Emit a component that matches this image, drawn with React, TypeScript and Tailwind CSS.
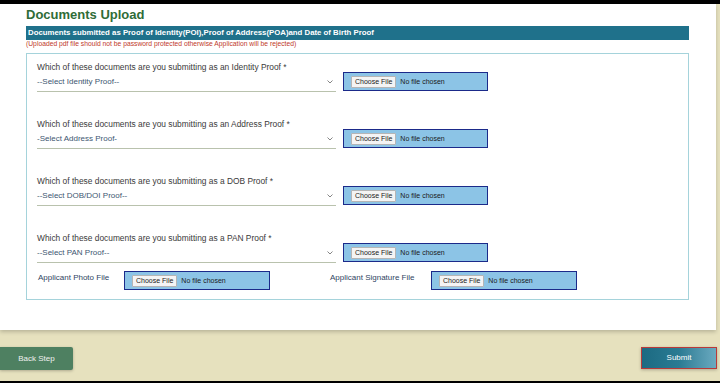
import React from "react";

const font = { fontFamily: '"Liberation Sans", Arial, sans-serif' };

const FileBox = ({ className = "" }: { className?: string }) => (
  <div
    className={`flex h-[19px] w-[145px] items-center gap-[4px] border-[1.5px] border-[#1b2a8a] bg-[#8cc4e6] pl-[7px] ${className}`}
  >
    <span className="flex h-[12px] items-center rounded-[1px] border border-[#b5b5b5] bg-[#f4f4f4] px-[3px] text-[7px] leading-none text-[#222]">
      Choose File
    </span>
    <span className="text-[7px] leading-none text-[#1a1a1a]">No file chosen</span>
  </div>
);

const ProofRow = ({ label, placeholder }: { label: string; placeholder: string }) => (
  <div className="flex items-end gap-[7px] pb-[26px]">
    <div className="flex w-[299px] flex-col">
      <div className="h-[12px] text-[8.4px] leading-[12px] text-[#3a3a3a]">{label}</div>
      <div className="flex h-[19px] items-center justify-between border-b border-[#b9c2ad] pr-[3px]">
        <span className="text-[8px] text-[#3d5670]">{placeholder}</span>
        <svg width="6" height="4" viewBox="0 0 6 4" fill="none">
          <path d="M0.5 0.5 L3 3 L5.5 0.5" stroke="#777" strokeWidth="0.9" />
        </svg>
      </div>
    </div>
    <FileBox className="mb-[1px]" />
  </div>
);

export default function App() {
  return (
    <div className="flex h-[383px] w-[720px] flex-col bg-[#e6e1be]" style={font}>
      <div className="h-[4px] bg-black" />
      <div className="mr-[4px] h-[326px] bg-white pl-[26px] pt-[3px] shadow-[0_2px_4px_rgba(0,0,0,0.2)]">
        <h1 className="text-[13px] font-bold leading-[16px] text-[#2f6c37]">Documents Upload</h1>
        <div className="mt-[3px] flex h-[14px] w-[663px] items-center bg-[#1f718b] pl-[2px] text-[7.8px] font-bold text-white">
          Documents submitted as Proof of Identity(POI),Proof of Address(POA)and Date of Birth Proof
        </div>
        <div className="h-[8px] text-[6.75px] leading-[8px] text-[#c0392b]">
          (Uploaded pdf file should not be password protected otherwise Application will be rejected)
        </div>
        <div className="mt-[5px] w-[663px] border border-[#a5d3db] pl-[10px] pt-[7px] pb-[8px]">
          <ProofRow
            label="Which of these documents are you submitting as an Identity Proof *"
            placeholder="--Select Identity Proof--"
          />
          <ProofRow
            label="Which of these documents are you submitting as an Address Proof *"
            placeholder="-Select Address Proof-"
          />
          <ProofRow
            label="Which of these documents are you submitting as a DOB Proof *"
            placeholder="--Select DOB/DOI Proof--"
          />
          <div className="-mb-[18px]">
            <ProofRow
              label="Which of these documents are you submitting as a PAN Proof *"
              placeholder="--Select PAN Proof--"
            />
          </div>
          <div className="flex h-[20px] items-start text-[8px] text-[#2f4562]">
            <span className="w-[87px] pl-[1px] pt-[1px]">Applicant Photo File</span>
            <FileBox className="w-[146px]" />
            <span className="ml-[60px] w-[101px] pt-[1px]">Applicant Signature File</span>
            <FileBox className="w-[146px]" />
          </div>
        </div>
      </div>
      <div className="mt-[17px] flex justify-between">
        <button className="flex h-[23px] w-[73px] items-center justify-center rounded-r-[2px] bg-[#4e8061] text-[8px] text-[#f0f0f0] shadow-[0_1px_3px_rgba(0,0,0,0.25)]">
          Back Step
        </button>
        <button className="mr-[3px] flex h-[22px] w-[76px] items-center justify-center border-[1.5px] border-[#b83a3a] bg-gradient-to-r from-[#1c6a82] via-[#2a7b93] to-[#6aaac0] text-[8px] font-medium text-white shadow-[0_1px_3px_rgba(0,0,0,0.25)]">
          Submit
        </button>
      </div>
      <div className="mt-auto h-[2px] bg-black" />
    </div>
  );
}
